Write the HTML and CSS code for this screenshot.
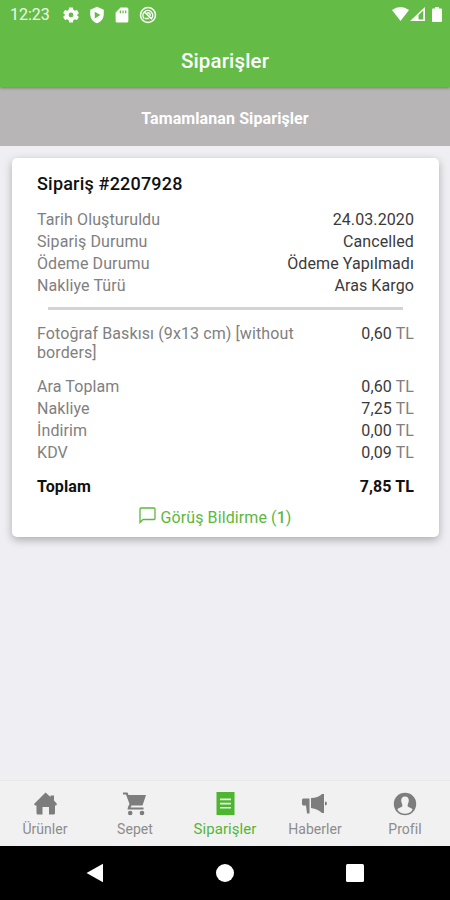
FILE: index.html
```html
<!DOCTYPE html>
<html lang="tr">
<head>
    <meta charset="UTF-8" />
    <meta name="viewport" content="width=device-width, initial-scale=1" />
    <title>Siparişler</title>
    <link rel="stylesheet" href="styles.css">
</head>
<body>
<header class="header">
    <div class="status-bar">
        <span class="clock">12:23</span>
        <div class="status-icons">
            <svg width="18" height="18" viewBox="0 0 24 24"><path fill-rule="evenodd" d="M9.500 2h5l.6 3 2 1.200 2.900-1 2.500 4.300L20.200 11.500v1l2.300 2-2.500 4.300-2.900-1-2 1.200-.6 3h-5l-.6-3-2-1.200-2.900 1-2.500-4.300 2.300-2v-1l-2.300-2L4 5.200l2.900 1 2-1.200zM12 15.200a3.200 3.200 0 1 0 0-6.400 3.200 3.200 0 0 0 0 6.400z"/></svg>
            <svg width="18" height="18" viewBox="0 0 24 24"><path fill-rule="evenodd" d="M12 1L3 5v6c0 5.600 3.800 10.700 9 12 5.200-1.300 9-6.400 9-12V5zM9 7.500l7.500 4.500L9 16.500z"/></svg>
            <svg width="18" height="18" viewBox="0 0 24 24"><path fill-rule="evenodd" d="M18.500 2H10L3.500 8.500V20a2 2 0 0 0 2 2h13a2 2 0 0 0 2-2V4a2 2 0 0 0-2-2zM9 6h1.700v3.500H9zM12.500 6h1.700v3.500h-1.700zM16 6h1.700v3.500H16z"/></svg>
            <svg class="line-icon" width="18" height="18" viewBox="0 0 24 24"><circle cx="12" cy="12" r="10"/><path d="M7 17a6.500 6.500 0 1 1 9.500 0M7.500 8l9.500 9.500M8 16.500h5M11 9a3.500 3.500 0 0 1 4 4"/></svg>
        </div>
        <div class="signal-icons">
            <svg width="17" height="14" viewBox="0 0 17 14"><path d="M0 3Q8.500-3 17 3L8.500 14z"/></svg>
            <svg width="15" height="14" viewBox="0 0 15 14"><path fill-rule="evenodd" d="M0 14L15 0v14zM8.500 8v4.500h4.800v-9z"/></svg>
            <svg class="battery" width="10" height="15" viewBox="0 0 10 15"><path d="M3 0h4v1.500h2a1 1 0 0 1 1 1V14a1 1 0 0 1-1 1H1a1 1 0 0 1-1-1V2.500a1 1 0 0 1 1-1h2z"/></svg>
        </div>
    </div>
    <h1>Siparişler</h1>
</header>

<div class="section-title">Tamamlanan Siparişler</div>

<main class="content">
    <div class="order-card">
        <h2>Sipariş #2207928</h2>
        <div class="row"><span>Tarih Oluşturuldu</span><b>24.03.2020</b></div>
        <div class="row"><span>Sipariş Durumu</span><b>Cancelled</b></div>
        <div class="row"><span>Ödeme Durumu</span><b>Ödeme Yapılmadı</b></div>
        <div class="row"><span>Nakliye Türü</span><b>Aras Kargo</b></div>
        <hr>
        <div class="row product"><span>Fotoğraf Baskısı (9x13 cm) [without borders]</span><b>0,60 <i>TL</i></b></div>
        <div class="row"><span>Ara Toplam</span><b>0,60 <i>TL</i></b></div>
        <div class="row"><span>Nakliye</span><b>7,25 <i>TL</i></b></div>
        <div class="row"><span>İndirim</span><b>0,00 <i>TL</i></b></div>
        <div class="row"><span>KDV</span><b>0,09 <i>TL</i></b></div>
        <div class="row total"><span>Toplam</span><b>7,85 TL</b></div>
        <a href="#" class="feedback">
            <svg width="17" height="17" viewBox="0 0 17 17"><path d="M1 15.500V2a1 1 0 0 1 1-1h13a1 1 0 0 1 1 1v9.500a1 1 0 0 1-1 1H4z"/></svg>
            <span>Görüş Bildirme (<strong>1</strong>)</span>
        </a>
    </div>
</main>

<nav class="tab-bar">
    <a href="#" class="tab">
        <svg width="26" height="26" viewBox="0 0 26 26"><path d="M13.500 1.500l5 4.500V4.500H22v5l3 3.500-.8 1.500H23V22a1.500 1.500 0 0 1-1.500 1.500H17V16h-6.500v7.500H6A1.500 1.500 0 0 1 4.500 22v-7.500H3L2 13z"/></svg>
        <span>Ürünler</span>
    </a>
    <a href="#" class="tab">
        <svg width="26" height="26" viewBox="0 0 26 26"><path d="M1 1.500h4.500L6.500 4H24l-3.500 10.500H9.500L8.500 16.500H21.500v2H5.500L6 16l1.500-3L4 3.500H1z"/><circle cx="8.200" cy="22" r="2.300"/><circle cx="20" cy="22" r="2.300"/></svg>
        <span>Sepet</span>
    </a>
    <a href="#" class="tab active">
        <svg width="26" height="26" viewBox="0 0 26 26"><path fill-rule="evenodd" d="M4.500 1h18v23h-18zM8 7.500v1.700h11V7.500zM8 11.700v1.700h11v-1.700zM8 15.900v1.700h11v-1.700z"/></svg>
        <span>Siparişler</span>
    </a>
    <a href="#" class="tab">
        <svg width="28" height="26" viewBox="0 0 28 26"><path d="M1 8.500L2 7.500h6.500v15H6l-1-8H2l-1-1zM10 7q7 0 11-4h2v19h-2q-4-4-11-5zM24 10.500a2 2 0 0 1 0 4z"/></svg>
        <span>Haberler</span>
    </a>
    <a href="#" class="tab">
        <svg width="26" height="26" viewBox="0 0 26 26"><circle cx="13" cy="13" r="11.200"/><path class="person" d="M13 5.500c2.700 0 4 1.800 3.800 4.500-.2 2-1.200 3-1.200 4.800 0 2 4.200 1.500 5 4C19 21.500 16 22.700 13 22.700s-6-1.200-7.600-3.900c.8-2.500 5-2 5-4 0-1.800-1-2.800-1.200-4.800-.2-2.700 1.100-4.500 3.800-4.500z"/></svg>
        <span>Profil</span>
    </a>
</nav>

<div class="system-nav">
    <svg width="18" height="20" viewBox="0 0 18 20"><path d="M17 .800v18.400L.500 10z"/></svg>
    <svg width="18" height="18" viewBox="0 0 18 18"><circle cx="9" cy="9" r="9"/></svg>
    <svg width="18" height="18" viewBox="0 0 18 18"><rect width="18" height="18" rx="1.500"/></svg>
</div>
</body>
</html>
```
FILE: styles.css
```css
* {
    box-sizing: border-box;
}
body {
    margin: 0;
    height: 100vh;
    display: flex;
    flex-direction: column;
    overflow: hidden;
    background-color: #eeeef3;
    font-family: Roboto, "Liberation Sans", sans-serif;
}
.header {
    position: relative;
    height: 87px;
    background-color: #64bc46;
    box-shadow: 0 1px 3px rgba(0,0,0,0.35);
    color: #fff;
}
.status-bar {
    display: flex;
    align-items: center;
    height: 29px;
    padding: 0 8px 0 10px;
}
.status-bar svg {
    display: block;
    fill: #fff;
}
.clock {
    width: 52px;
    font-size: 16px;
    color: #f0f8ed;
}
.status-icons {
    display: flex;
    gap: 7.500px;
}
.status-bar .line-icon {
    fill: none;
    stroke: #fff;
    stroke-width: 2;
}
.signal-icons {
    display: flex;
    gap: 1px;
    margin-left: auto;
}
.battery {
    margin-left: 6px;
}
.header h1 {
    margin: 19px 0 0;
    font-size: 20.500px;
    line-height: 26px;
    font-weight: 500;
    letter-spacing: 0.15px;
    text-align: center;
}
.section-title {
    height: 59px;
    background-color: #b7b5b6;
    color: #fff;
    font-size: 16px;
    font-weight: 700;
    letter-spacing: 0.1px;
    line-height: 63px;
    text-align: center;
}
.content {
    flex: 1;
    padding: 12px 11px 0 12px;
}
.order-card {
    height: 379px;
    padding: 13px 25px 0 25px;
    background-color: #fff;
    border-radius: 5px;
    box-shadow: 0 3px 9px rgba(0,0,0,0.28);
}
.order-card h2 {
    margin: 0 0 13px;
    font-size: 18px;
    font-weight: 500;
    letter-spacing: 0.2px;
    line-height: 25px;
    color: #111;
}
.row {
    display: flex;
    justify-content: space-between;
    font-size: 16px;
    letter-spacing: 0.1px;
    line-height: 22px;
    color: #808080;
}
.row b {
    font-weight: 400;
    color: #3a3a3a;
}
.row i {
    font-style: normal;
    color: #808080;
}
.order-card hr {
    height: 3px;
    margin: 10px 11px 14px 11px;
    border: 0;
    background-color: #d4d4d4;
}
.product {
    margin-bottom: 14px;
    line-height: 19px;
}
.product span {
    width: 280px;
}
.total {
    margin-top: 12px;
}
.total span, .total b {
    color: #111;
    font-weight: 700;
}
.feedback {
    display: flex;
    justify-content: center;
    gap: 4px;
    margin: 9px 20px 0 0;
    color: #5cb840;
    font-size: 16px;
    letter-spacing: 0.1px;
    line-height: 22px;
    text-decoration: none;
}
.feedback svg {
    fill: none;
    stroke: #5cb840;
    stroke-width: 1.300;
}
.feedback strong {
    font-weight: 500;
}
.tab-bar {
    display: flex;
    height: 66px;
    border-top: 1px solid #e8e8e8;
    background-color: #f1f1f1;
}
.tab {
    flex: 1;
    display: flex;
    flex-direction: column;
    align-items: center;
    padding-top: 10px;
    color: #8c8c8c;
    font-size: 14px;
    letter-spacing: 0.05px;
    line-height: 18px;
    text-decoration: none;
}
.tab svg {
    margin-bottom: 3px;
    fill: #7d7d7d;
}
.tab .person {
    fill: #f1f1f1;
}
.tab.active {
    color: #55b536;
    font-size: 15px;
}
.tab.active svg {
    fill: #4db62f;
}
.system-nav {
    display: flex;
    justify-content: space-between;
    align-items: center;
    height: 54px;
    padding: 0 86px 0 86px;
    background-color: #000;
}
.system-nav svg {
    fill: #fff;
}
```
